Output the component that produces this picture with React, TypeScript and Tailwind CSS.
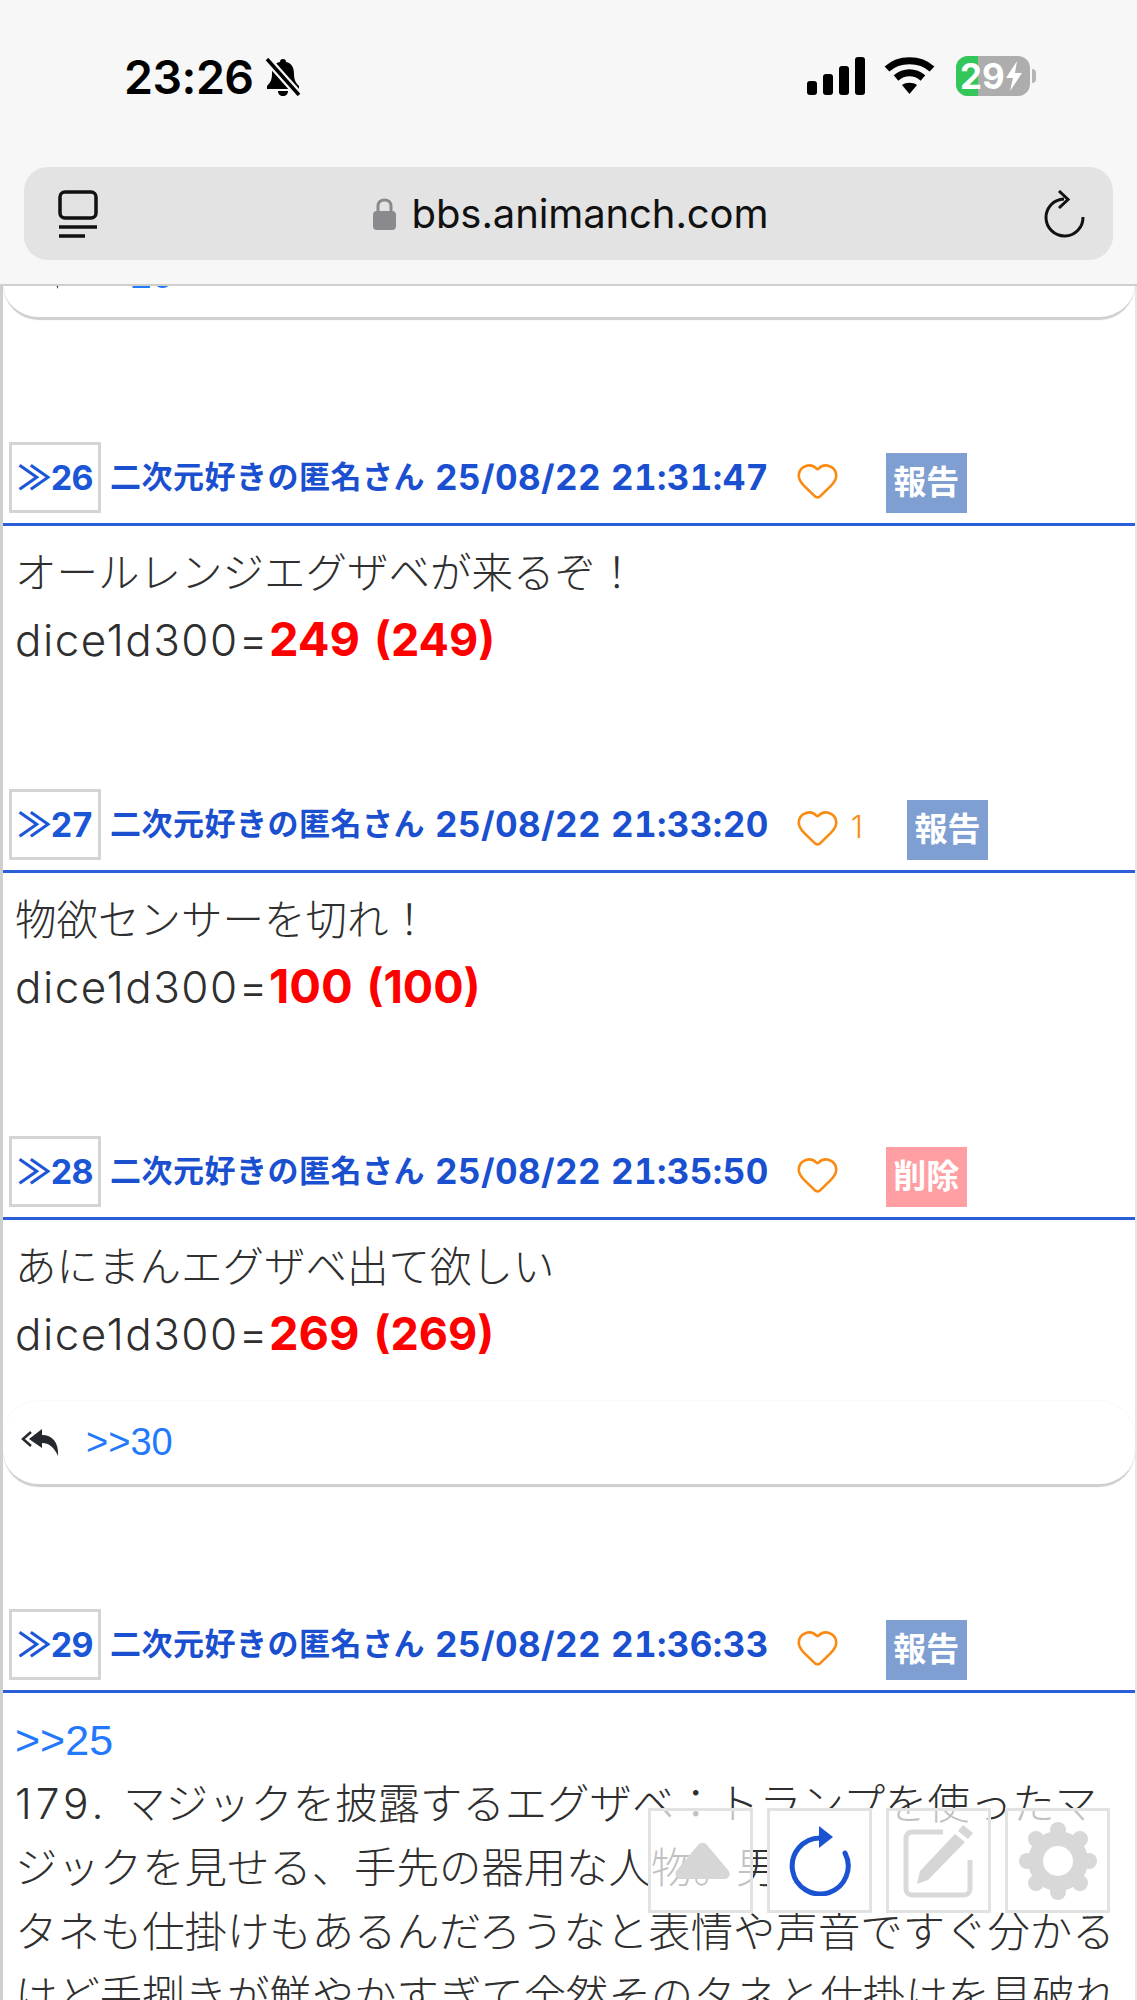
import React from 'react';
import { Heart } from 'lucide-react';

const FONT = "font-['Inter','Noto_Sans_CJK_JP',sans-serif]";
const LINK = "font-['Liberation_Sans',sans-serif] text-[#2279fb]";

const ReplyIcon = () => (
  <svg className="h-[28px] w-[38px]" viewBox="0 0 38 28" fill="none">
    <path d="M10 3 L2 10 L10 17" stroke="#25282c" strokeWidth="2.5" />
    <path d="M21 0 L8 10 L21 19 V14 C28 14 33 18 37 27 C38 13 31 6 21 6 Z" fill="#25282c" />
  </svg>
);

const PostHeader = ({ no, time, likes, action = '報告' }: { no: number; time: string; likes?: number; action?: string }) => (
  <div className="flex h-[84px] items-start border-b-[3px] border-[#2a5fd8] pl-[6px]">
    <div className="flex h-[71px] w-[92px] items-center justify-center border-[3px] border-[#d4d4d4] text-[34px] font-bold text-[#1a56d6]">
      <span className="tracking-[-1px] tabular-nums">≫{no}</span>
    </div>
    <div className="ml-[9px] flex h-[71px] items-center whitespace-nowrap text-[31px] font-bold tracking-[0.5px] text-[#1a4fd0]">
      二次元好きの匿名さん <span className="ml-[10px] text-[35px] tracking-[0.4px] tabular-nums">25/08/22 {time}</span>
    </div>
    <div className="ml-[26px] flex h-[71px] items-center pt-[6px]">
      <Heart className="h-[45px] w-[45px] text-[#f98b13]" strokeWidth={1.4} />
      {likes ? <span className="ml-[11px] text-[31px] font-light text-[#f98b13]">{likes}</span> : null}
    </div>
    <div
      className={`${likes ? 'ml-[44px]' : 'ml-[46px]'} mt-[11px] flex h-[60px] w-[81px] items-center justify-center text-[33px] font-bold text-white ${
        action === '削除' ? 'bg-[#ff9fa3]' : 'bg-[#7f9fd2]'
      }`}
    >
      {action}
    </div>
  </div>
);

const ReplyCard = ({ to, className }: { to: number; className?: string }) => (
  <div className={`flex h-[86px] items-center rounded-[36px] border-b-[3px] border-[#d0d0d0] bg-white pl-[18px] shadow-[0_0_2px_rgba(0,0,0,0.08)] ${className ?? ''}`}>
    <ReplyIcon />
    <span className={`ml-[27px] text-[38px] ${LINK}`}>&gt;&gt;{to}</span>
  </div>
);

const Post = ({
  no,
  time,
  first,
  roll,
  likes,
  action,
  reply,
}: {
  no: number;
  time: string;
  first: string;
  roll: number;
  likes?: number;
  action?: string;
  reply?: number;
}) => (
  <section className={reply ? 'mb-[122px]' : 'mb-[82px]'}>
    <PostHeader no={no} time={time} likes={likes} action={action} />
    <div className="pb-[36px] pl-[12px] pt-[15px] text-[41.5px] font-light leading-[65px] text-[#2f2f2f]">
      <div className="h-[65px]">{first}</div>
      <div className="h-[65px] whitespace-nowrap">
        <span className="text-[44px] tracking-[1.5px]">dice1d300=</span>
        <span className="font-bold text-[#fe0000]">
          <span className="text-[47px]">{roll}</span> <span className="ml-[4px] text-[45px]">({roll})</span>
        </span>
      </div>
    </div>
    {reply ? <ReplyCard to={reply} /> : null}
  </section>
);

const StatusBar = () => (
  <div className="flex h-[167px] items-start justify-between pl-[124px] pr-[101px] pt-[56px]">
    <div className="flex items-center text-black">
      <span className="text-[46.5px] font-semibold leading-[42px] tracking-[-0.5px]">23:26</span>
      <svg className="ml-[10px] h-[38px] w-[38px]" viewBox="0 0 38 38" fill="black">
        <path d="M19 1 C21 1 22 2 22 4 C28 5 30 10 30 16 C30 22 32 25 35 28 V31 H3 V28 C6 25 8 22 8 16 C8 10 10 5 16 4 C16 2 17 1 19 1 Z" />
        <path d="M14 33 H24 C24 36 22 38 19 38 C16 38 14 36 14 33 Z" />
        <path d="M3 1 L35 37" stroke="#f7f7f7" strokeWidth="8" />
        <path d="M3 1 L35 37" stroke="black" strokeWidth="3.5" />
      </svg>
    </div>
    <div className="flex items-center">
      <svg className="h-[38px] w-[58px]" viewBox="0 0 58 38" fill="black">
        <rect x="0" y="24" width="10" height="14" rx="3" />
        <rect x="16" y="17" width="10" height="21" rx="3" />
        <rect x="32" y="9" width="10" height="29" rx="3" />
        <rect x="48" y="0" width="10" height="38" rx="3" />
      </svg>
      <svg className="ml-[19px] h-[38px] w-[51px]" viewBox="0 0 51 38" fill="none" stroke="black" strokeWidth="7">
        <path d="M3 12 C15 1 36 1 48 12" />
        <path d="M12 21 C20 14 31 14 39 21" />
        <path d="M25.5 37 L18 28 C22 25 29 25 33 28 Z" fill="black" stroke="none" />
      </svg>
      <div className="relative ml-[21px] flex h-[40px] w-[74px] overflow-hidden rounded-[12px] bg-[#adadad]">
        <div className="w-[22px] bg-[#33c759]" />
        <div className="absolute inset-0 flex items-center pl-[4px] text-[35px] font-bold leading-none text-white">
          <span>29</span>
          <svg className="h-[30px] w-[18px]" viewBox="0 0 18 30" fill="white">
            <path d="M12 0 L1 17 H8 L5 30 L17 12 H10 Z" />
          </svg>
        </div>
      </div>
      <div className="ml-[2px] h-[14px] w-[4px] rounded-r-full bg-[#b5b5b5]" />
    </div>
  </div>
);

const UrlBar = () => (
  <div className="mx-[24px] flex h-[93px] items-center justify-between rounded-[24px] bg-[#e3e3e3] pl-[34px] pr-[28px]">
    <svg className="h-[48px] w-[40px]" viewBox="0 0 40 48" fill="none" stroke="#111" strokeWidth="3.5">
      <rect x="2" y="2" width="36" height="26" rx="5" />
      <path d="M1 37 H39" />
      <path d="M1 46 H27" />
    </svg>
    <div className="flex items-center">
      <svg className="h-[32px] w-[23px]" viewBox="0 0 23 32" fill="none">
        <path d="M5 15 V8 C5 4 8 2 11.5 2 C15 2 18 4 18 8 V15" stroke="#8a898e" strokeWidth="3" />
        <rect x="0" y="13" width="23" height="19" rx="4" fill="#8a898e" />
      </svg>
      <span className="ml-[16px] text-[40px] leading-none tracking-[-0.1px] text-[#111]">bbs.animanch.com</span>
    </div>
    <svg className="h-[48px] w-[42px]" viewBox="0 0 42 48" fill="none" stroke="#111" strokeWidth="3">
      <path d="M21 9 A18.5 18.5 0 1 0 40 27" />
      <path d="M16 1 L25 9.5 L16 18" />
    </svg>
  </div>
);

const FloatBox = ({ solid, children }: { solid?: boolean; children?: React.ReactNode }) => (
  <div className={`flex h-[105px] w-[105px] items-center justify-center border-[3px] border-[#e2e2e2] ${solid ? 'bg-white' : 'bg-white/70'}`}>
    {children}
  </div>
);

const FloatButtons = () => (
  <div className="absolute left-[648px] top-[1808px] z-10 flex gap-[14px]">
    <FloatBox>
      <svg className="ml-[4px] h-[37px] w-[55px]" viewBox="0 0 55 37" fill="#d6d6d6">
        <path d="M23 3 C25.5 0 29.5 0 32 3 L53 28 C56.5 32 54 37 49 37 H6 C1 37 -1.5 32 2 28 Z" />
      </svg>
    </FloatBox>
    <FloatBox solid>
      <svg className="h-[70px] w-[62px]" viewBox="0 0 62 70" fill="none" stroke="#1a52d2" strokeWidth="5" strokeLinecap="round">
        <path d="M31 12 A28 28 0 1 0 56 27" />
        <path d="M30 0 L44 11 L30 22 Z" fill="#1a52d2" stroke="none" />
      </svg>
    </FloatBox>
    <FloatBox>
      <svg className="h-[74px] w-[72px]" viewBox="0 0 72 74" fill="none">
        <path d="M40 8 H9 A6 6 0 0 0 3 14 V65 A6 6 0 0 0 9 71 H61 A6 6 0 0 0 67 65 V36" stroke="#d9d9d9" strokeWidth="5" />
        <path d="M60 1 L70 9 L65 15 L55 7 Z M52 10 L62 18 L25 56 L14 60 L17 47 Z" fill="#d6d6d6" />
      </svg>
    </FloatBox>
    <FloatBox>
      <svg className="h-[80px] w-[80px]" viewBox="0 0 80 80" fill="#d8d8d8">
        <circle cx="40" cy="40" r="30" />
        <circle cx="40" cy="9" r="8" />
        <circle cx="40" cy="71" r="8" />
        <circle cx="9" cy="40" r="8" />
        <circle cx="71" cy="40" r="8" />
        <circle cx="18" cy="18" r="8" />
        <circle cx="62" cy="18" r="8" />
        <circle cx="18" cy="62" r="8" />
        <circle cx="62" cy="62" r="8" />
        <circle cx="40" cy="40" r="15" fill="white" />
      </svg>
    </FloatBox>
  </div>
);

export default function App() {
  return (
    <div className={`relative h-[2000px] w-[1137px] overflow-hidden bg-white ${FONT}`}>
      <header className="relative z-20 h-[286px] border-b-[2px] border-[#cfcfcf] bg-[#f7f7f7]">
        <StatusBar />
        <UrlBar />
      </header>

      <main className="h-[1714px] overflow-hidden border-l-[3px] border-r-[2px] border-l-[#cfcfcf] border-r-[#e6e6e6]">
        <ReplyCard to={26} className="-mt-[52px] mb-[122px]" />
        <Post no={26} time="21:31:47" first="オールレンジエグザベが来るぞ！" roll={249} />
        <Post no={27} time="21:33:20" first="物欲センサーを切れ！" roll={100} likes={1} />
        <Post no={28} time="21:35:50" first="あにまんエグザベ出て欲しい" roll={269} action="削除" reply={30} />

        <section>
          <PostHeader no={29} time="21:36:33" />
          <div className="pl-[12px] pt-[15px] text-[42.4px] font-light leading-[64px] text-[#2f2f2f]">
            <div className={`h-[64px] text-[43px] ${LINK}`}>&gt;&gt;25</div>
            <div className="h-[64px] whitespace-nowrap">
              <span className="tracking-[4px]">179. </span>マジックを披露するエグザベ：トランプを使ったマ
            </div>
            <div className="h-[64px] whitespace-nowrap">ジックを見せる、手先の器用な人物。男性。</div>
            <div className="h-[64px] whitespace-nowrap">タネも仕掛けもあるんだろうなと表情や声音ですぐ分かる</div>
            <div className="h-[64px] whitespace-nowrap">けど手捌きが鮮やかすぎて全然そのタネと仕掛けを見破れ</div>
          </div>
        </section>
      </main>

      <FloatButtons />
    </div>
  );
}
